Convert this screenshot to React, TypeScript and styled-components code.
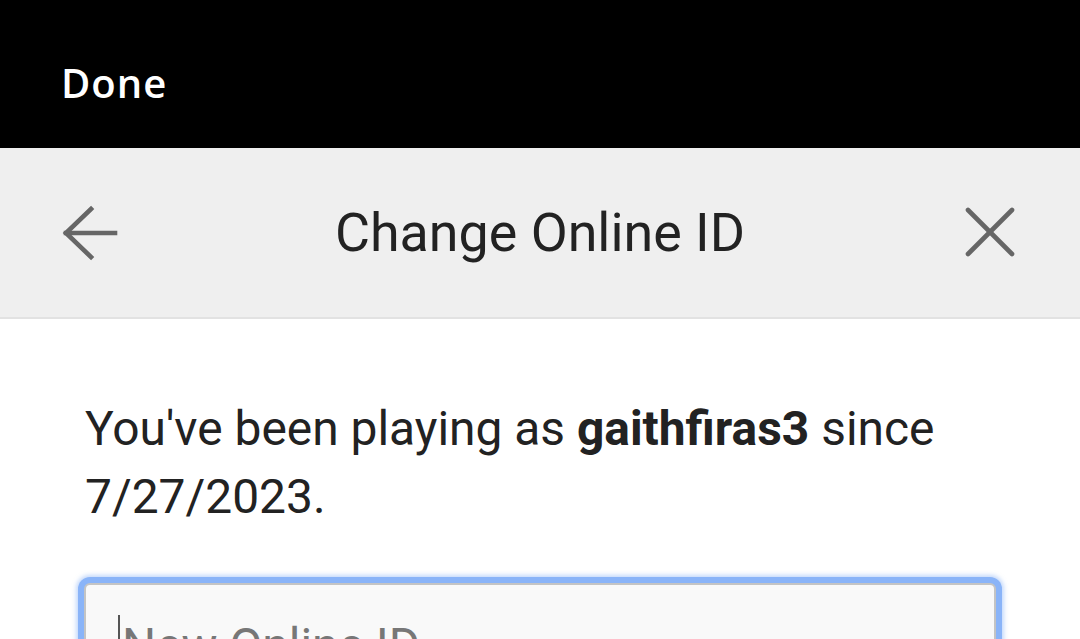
import React from 'react';
import styled, { createGlobalStyle } from 'styled-components';

const GlobalStyle = createGlobalStyle`
  html, body {
    margin: 0;
    padding: 0;
    background: #ffffff;
    overflow: hidden;
  }
  body {
    font-family: Roboto, 'Noto Sans', sans-serif;
  }
`;

const Page = styled.div`
  width: 1080px;
  height: 639px;
  display: flex;
  flex-direction: column;
  background: #ffffff;
  overflow: hidden;
`;

const TopBar = styled.div`
  flex-shrink: 0;
  height: 148px;
  background: #000000;
  display: flex;
  align-items: flex-start;
  padding: 55px 0 0 61px;
  box-sizing: border-box;
`;

const DoneButton = styled.span`
  color: #ffffff;
  font-family: 'Open Sans', sans-serif;
  font-weight: 600;
  font-size: 40px;
  letter-spacing: 1px;
`;

const Header = styled.div`
  flex-shrink: 0;
  height: 171px;
  background: #efefef;
  border-bottom: 2px solid #e2e2e2;
  box-sizing: border-box;
  display: flex;
  align-items: center;
  padding: 0 60px;
`;

const IconButton = styled.button`
  width: 60px;
  height: 60px;
  padding: 0;
  border: none;
  background: transparent;
  display: flex;
  align-items: center;
  justify-content: center;
  color: #666666;
`;

const Title = styled.h1`
  flex: 1;
  margin: 0;
  text-align: center;
  font-family: Roboto, sans-serif;
  font-weight: 400;
  font-size: 53.8px;
  color: #222222;
`;

const Body = styled.div`
  flex-shrink: 0;
  padding: 76px 85px 0 85px;
  display: flex;
  flex-direction: column;
  gap: 52px;
`;

const Message = styled.p`
  margin: 0;
  font-size: 47.9px;
  line-height: 68px;
  color: #222222;

  strong {
    font-weight: 700;
  }
`;

const InputField = styled.div`
  margin-left: -1px;
  width: 912px;
  height: 120px;
  box-sizing: border-box;
  background: #f9f9f9;
  border: 2px solid #c4c4c4;
  border-radius: 6px;
  box-shadow: 0 0 0 6px #8ab4f8, 0 0 4px 8px rgba(138, 180, 248, 0.5);
  display: flex;
  align-items: flex-start;
  padding: 30px 0 0 32px;
`;

const Caret = styled.span`
  width: 2px;
  height: 54px;
  background: #555555;
  margin-right: 2px;
`;

const Placeholder = styled.span`
  font-size: 47.9px;
  line-height: 62px;
  color: #777777;
`;

const BackIcon = () => (
  <svg width="60" height="60" viewBox="0 0 60 60" fill="none" stroke="currentColor" strokeWidth="4.6" strokeLinecap="square">
    <path d="M6 30 H55" />
    <path d="M31 6 L6 30 L31 54" strokeLinejoin="miter" />
  </svg>
);

const CloseIcon = () => (
  <svg width="60" height="60" viewBox="0 0 60 60" fill="none" stroke="currentColor" strokeWidth="4.6" strokeLinecap="round">
    <path d="M8 7 L52 51" />
    <path d="M52 7 L8 51" />
  </svg>
);

export default function App() {
  return (
    <Page>
      <GlobalStyle />
      <TopBar>
        <DoneButton>Done</DoneButton>
      </TopBar>
      <Header>
        <IconButton aria-label="Back">
          <BackIcon />
        </IconButton>
        <Title>Change Online ID</Title>
        <IconButton aria-label="Close">
          <CloseIcon />
        </IconButton>
      </Header>
      <Body>
        <Message>
          You've been playing as <strong>gaithfiras3</strong> since 7/27/2023.
        </Message>
        <InputField>
          <Caret />
          <Placeholder>New Online ID</Placeholder>
        </InputField>
      </Body>
    </Page>
  );
}
